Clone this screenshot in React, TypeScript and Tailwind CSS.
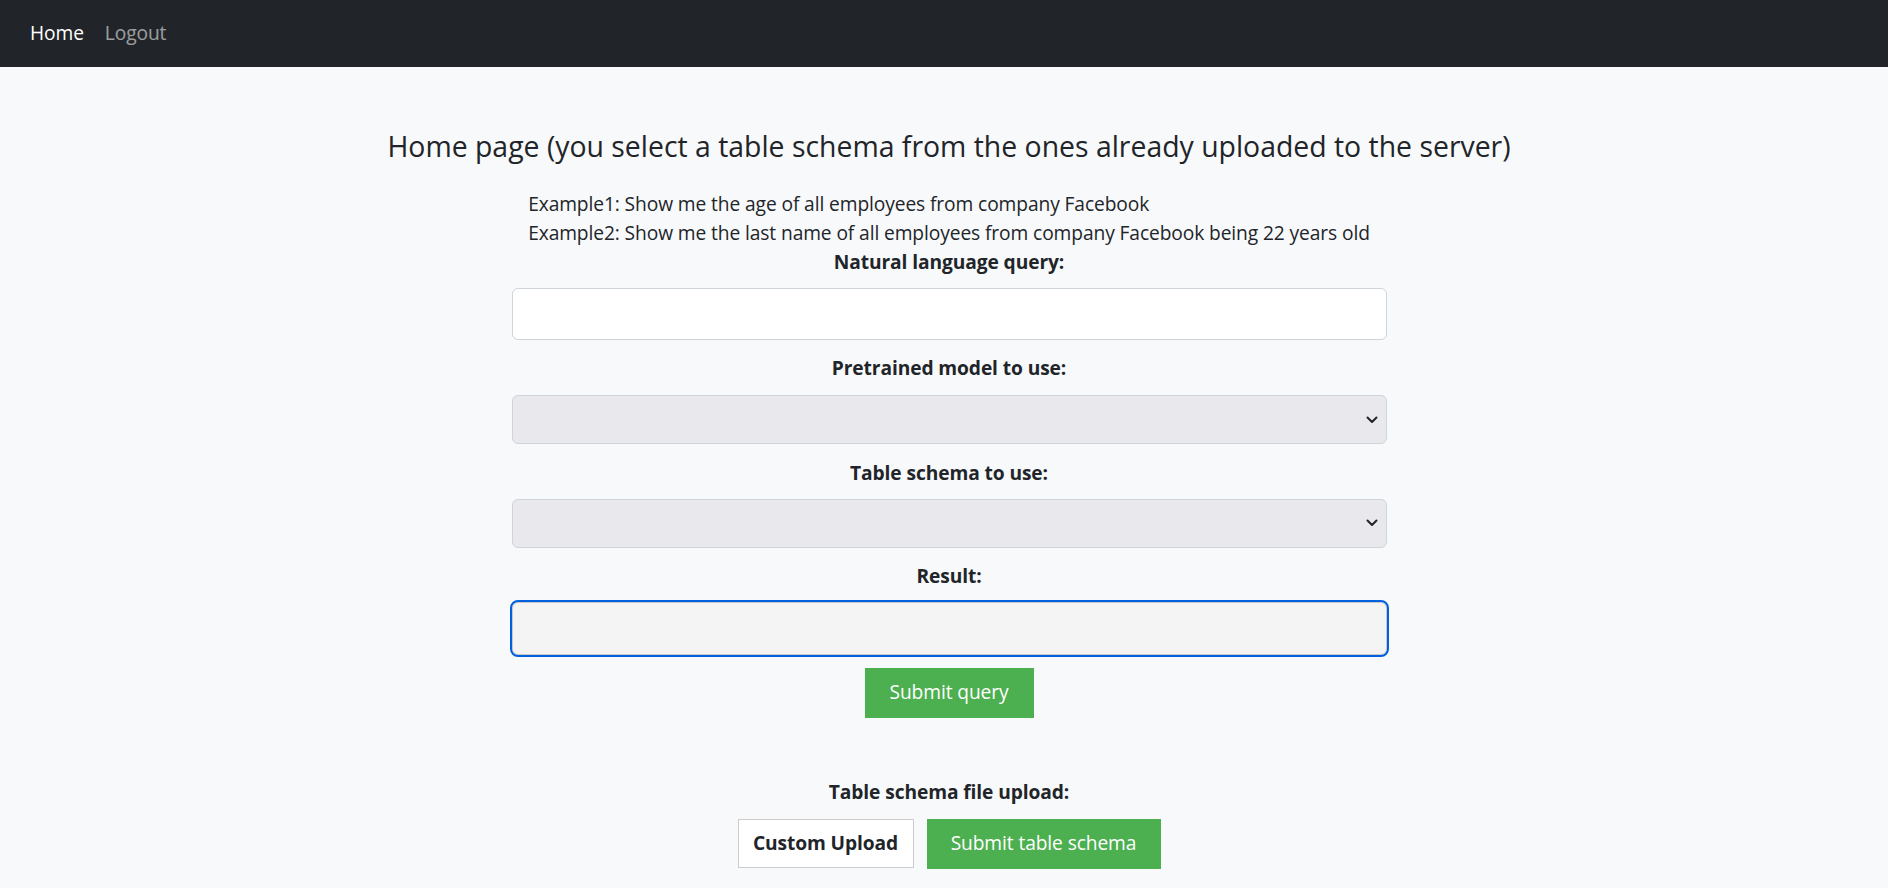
import React from 'react';

const Chevron = () => (
  <svg
    className="absolute right-[8px] top-1/2 -translate-y-1/2"
    width="12"
    height="8"
    viewBox="0 0 12 8"
    fill="none"
  >
    <path d="M1.5 1.5l4.5 4.5 4.5-4.5" stroke="#212529" strokeWidth="2" strokeLinecap="round" strokeLinejoin="round" />
  </svg>
);

const Label = ({ children, className = '' }: { children: React.ReactNode; className?: string }) => (
  <label className={`block text-center font-bold leading-[28.8px] ${className}`}>{children}</label>
);

export default function App() {
  return (
    <div className="min-h-screen bg-[#f8f9fa] text-[#212529] font-['Open_Sans','Noto_Sans',sans-serif] text-[19.2px] tracking-[-0.1px]">
      <nav className="h-[67px] bg-[#212529] flex items-center px-[30px] gap-[21px]">
        <a className="text-white">Home</a>
        <a className="text-white/55">Logout</a>
      </nav>

      <main className="flex flex-col items-center pl-[10px]">
        <h4 className="mt-[62px] text-[28.4px] leading-[34.6px] font-normal tracking-normal">
          Home page (you select a table schema from the ones already uploaded to the server)
        </h4>

        <div className="mt-[25px] text-left leading-[29px]">
          <div>Example1: Show me the age of all employees from company Facebook</div>
          <div>Example2: Show me the last name of all employees from company Facebook being 22 years old</div>
        </div>

        <div className="w-[875px] flex flex-col">
          <Label className="mt-[1px]">Natural language query:</Label>
          <input
            type="text"
            className="mt-[12px] h-[52px] w-full rounded-[6px] border border-[#ced4da] bg-white px-[14px]"
          />

          <Label className="mt-[14px]">Pretrained model to use:</Label>
          <div className="relative mt-[12px] h-[49px] w-full rounded-[6px] border border-[#ced4da] bg-[#e9e8ed]">
            <Chevron />
          </div>

          <Label className="mt-[15px]">Table schema to use:</Label>
          <div className="relative mt-[11px] h-[49px] w-full rounded-[6px] border border-[#ced4da] bg-[#e9e8ed]">
            <Chevron />
          </div>

          <Label className="mt-[14px]">Result:</Label>
          <div className="mt-[11px] h-[53px] w-full rounded-[6px] border border-[#c8c8c8] bg-[#f4f4f4] outline-2 outline-[#0060df]" />

          <div className="flex justify-center mt-[13px]">
            <button className="h-[50px] w-[169px] bg-[#4caf50] text-white">Submit query</button>
          </div>

          <Label className="mt-[60px]">Table schema file upload:</Label>
          <div className="flex justify-center gap-[13px] mt-[12px]">
            <button className="h-[49px] w-[176px] border border-[#cccccc] bg-white font-bold">Custom Upload</button>
            <button className="h-[50px] w-[234px] bg-[#4caf50] text-white">Submit table schema</button>
          </div>
        </div>
      </main>
    </div>
  );
}
